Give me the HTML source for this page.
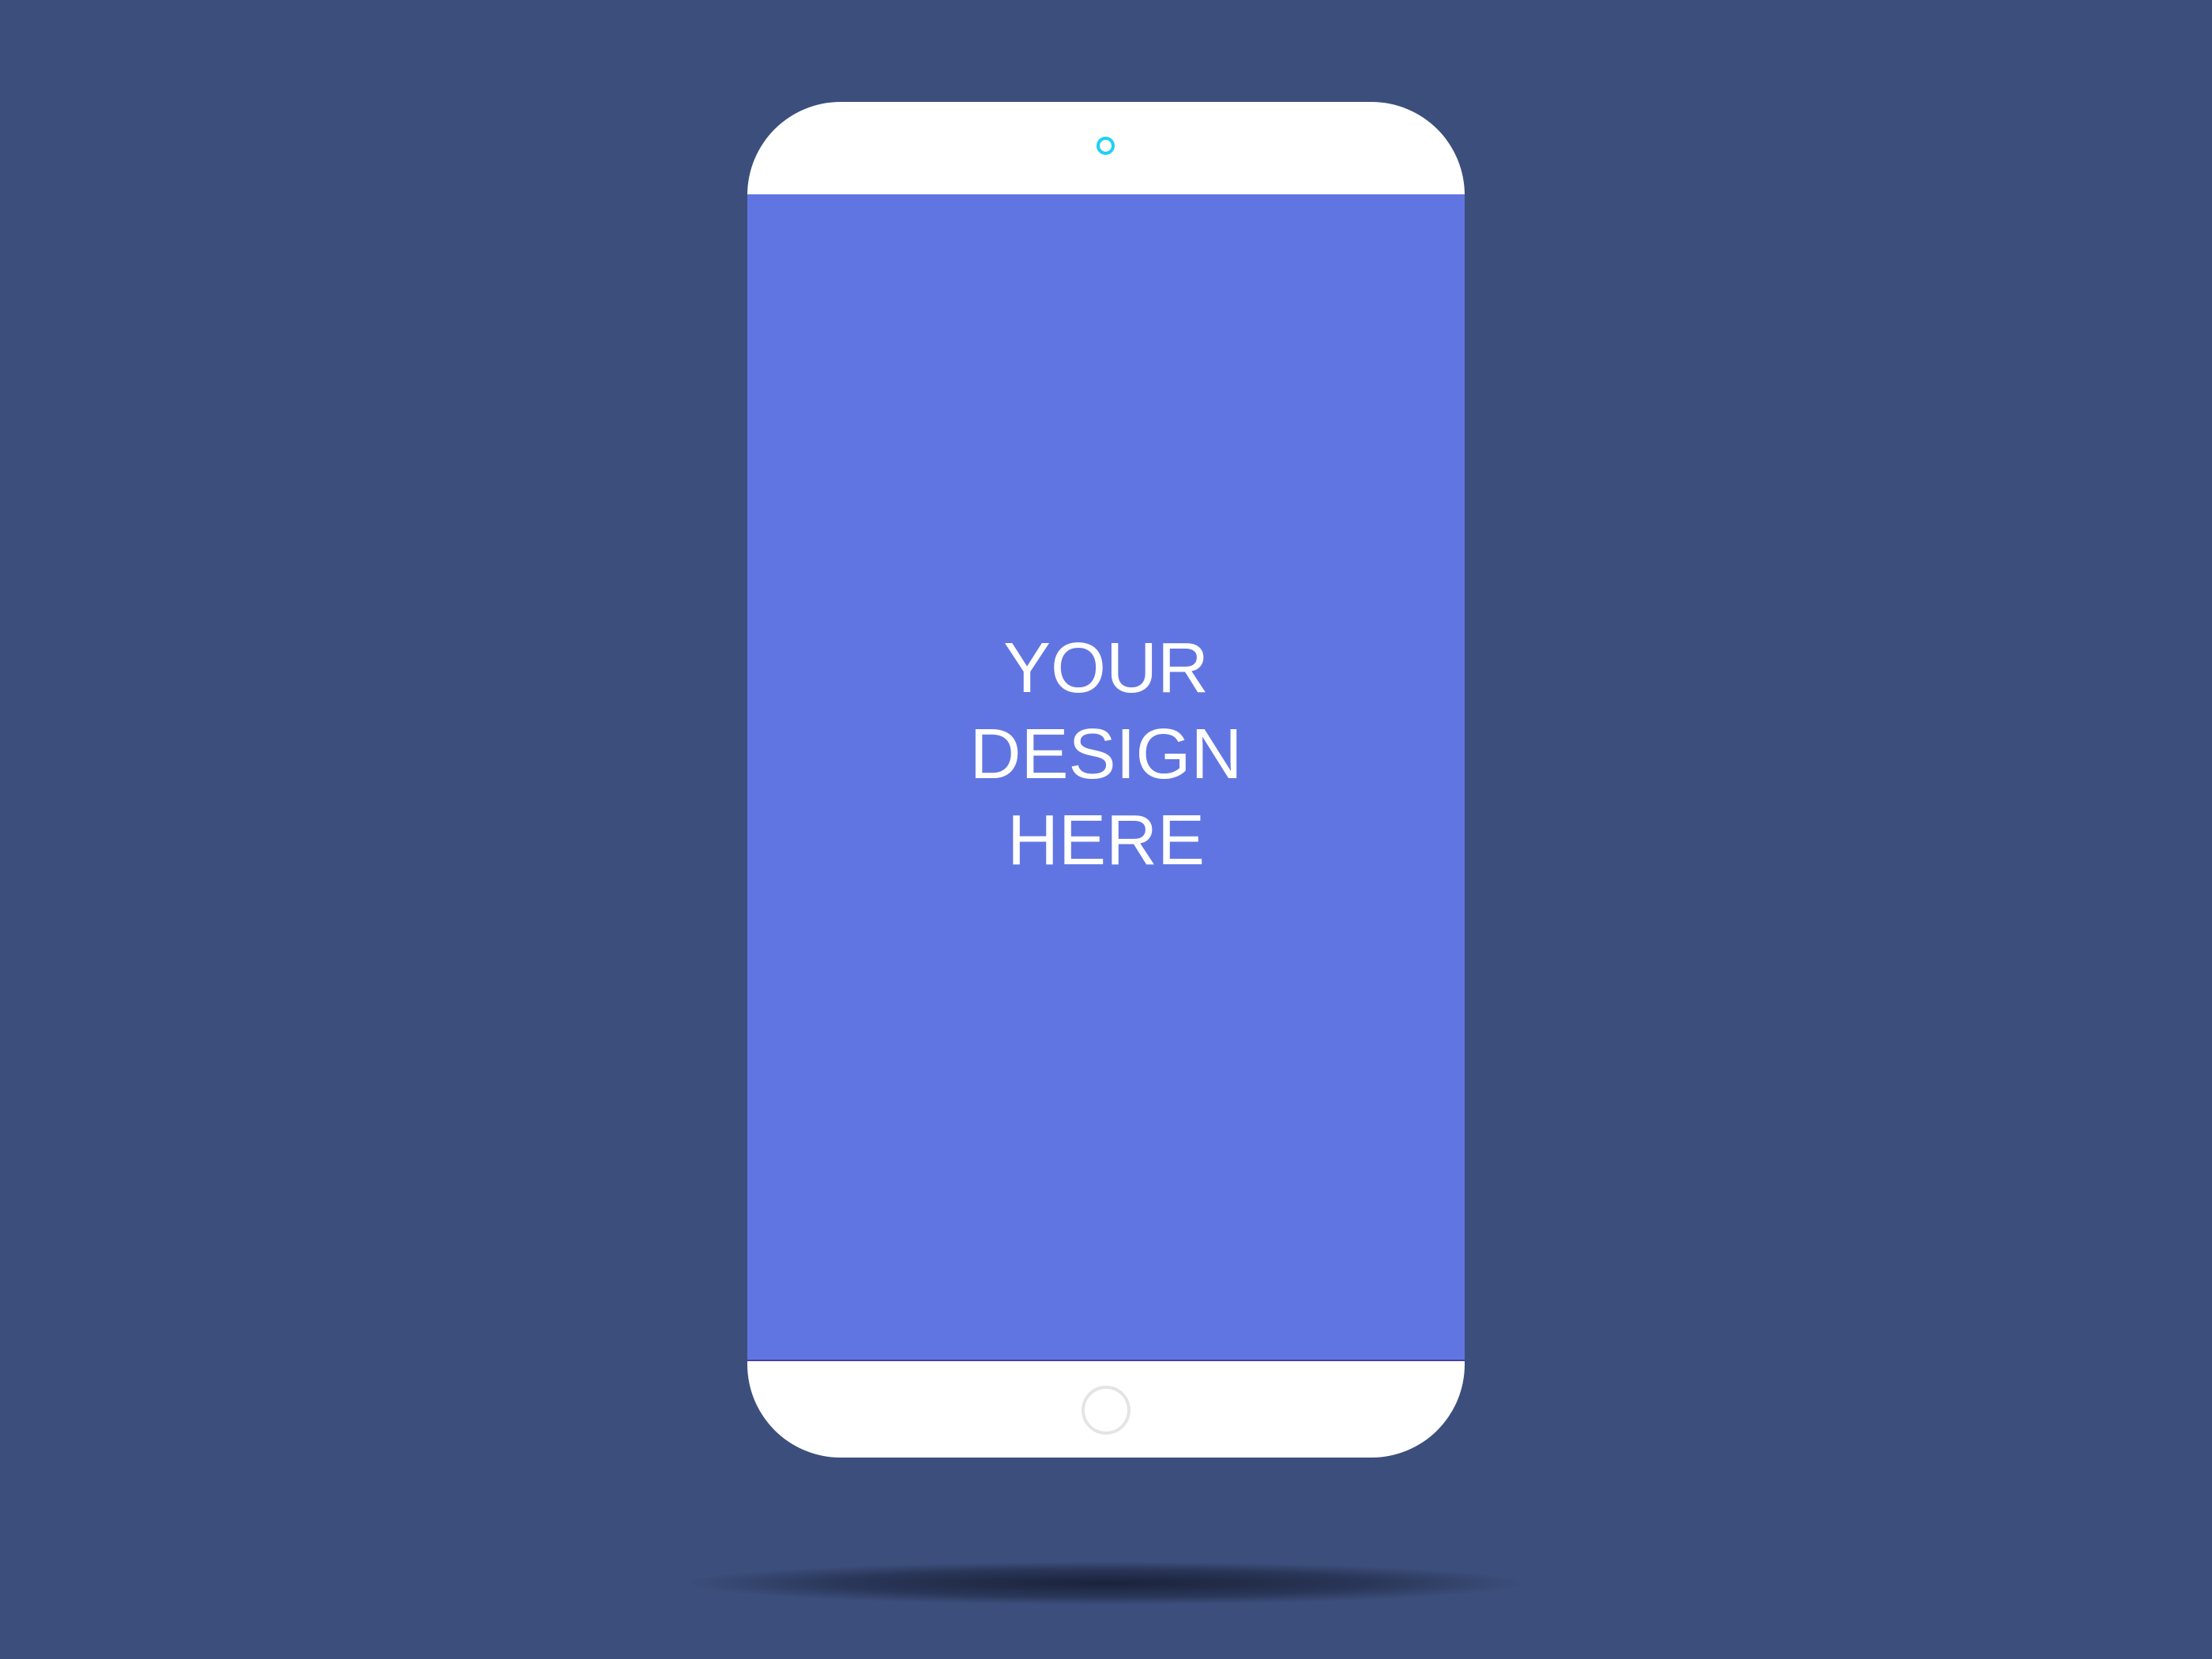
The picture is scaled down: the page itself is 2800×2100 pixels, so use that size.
<!DOCTYPE html>
<html><head><style>
html,body{margin:0;padding:0}
body{width:2800px;height:2100px;background:#3c4f7c;position:relative;overflow:hidden;font-family:"Liberation Sans",Arial,sans-serif}
.phone{position:absolute;left:946px;top:129px;width:908px;height:1716px;background:#fff;border-radius:118px}
.screen{position:absolute;left:946px;top:246px;width:908px;height:1477px;background:#6175e2;border-bottom:2px solid #4a3fa0;box-sizing:border-box}
.cam{position:absolute;left:1388px;top:173px;width:15px;height:15px;border:4px solid #1ed0f5;border-radius:50%}
.home{position:absolute;left:1369px;top:1754px;border:4px solid #e4e4e4;border-radius:50%;box-sizing:border-box;width:62px;height:62px}
.txt{position:absolute;left:946px;width:908px;top:792px;text-align:center;color:#fff;font-size:90px;line-height:109px}
.shadow{position:absolute;left:873px;top:1977px;width:1054px;height:54px;border-radius:50%;background:radial-gradient(ellipse at center,rgba(25,32,55,.95) 0%,rgba(30,38,65,.6) 45%,rgba(60,79,124,0) 72%)}
</style></head><body>
<div class="shadow"></div>
<div class="phone"></div>
<div class="screen"></div>
<div class="cam"></div>
<div class="home"></div>
<div class="txt">YOUR<br>DESIGN<br>HERE</div>
</body></html>
